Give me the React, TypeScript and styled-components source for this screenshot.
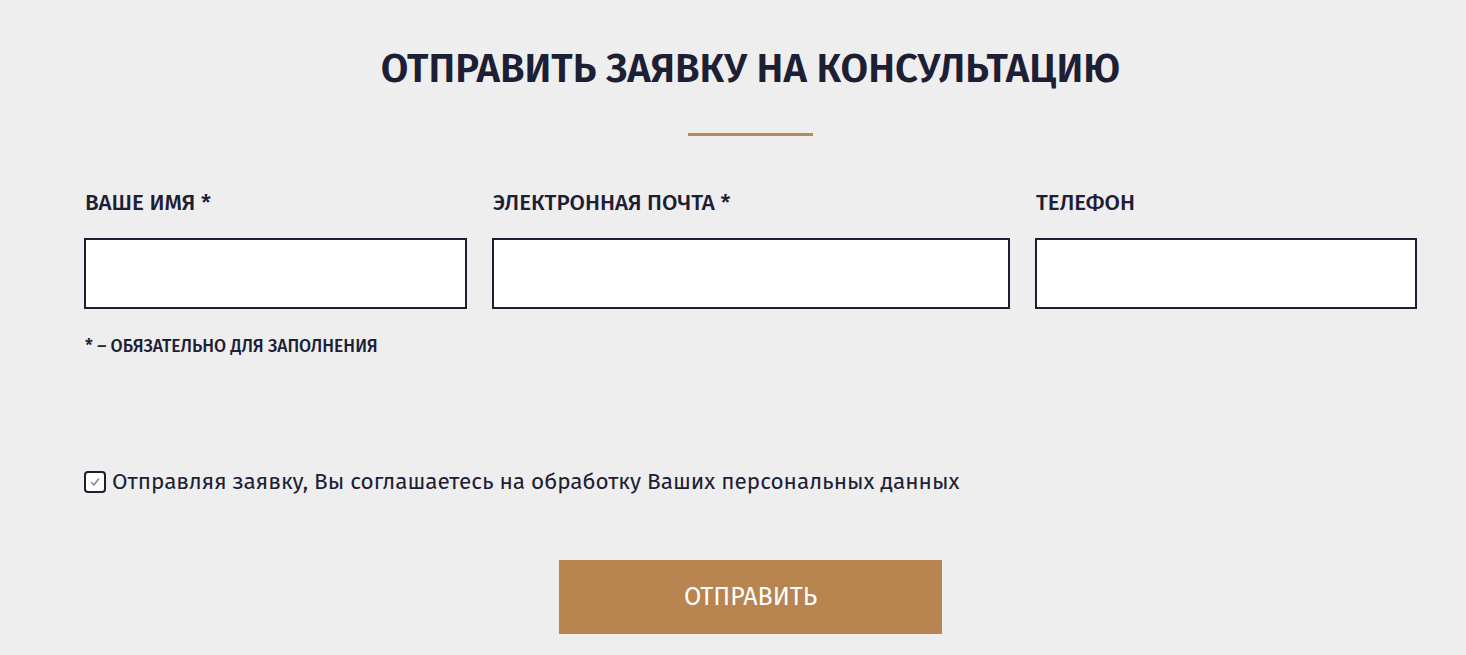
import React, { useState } from "react";
import styled, { createGlobalStyle } from "styled-components";

const GlobalStyle = createGlobalStyle`
  html, body {
    margin: 0;
    padding: 0;
    background: #eeeeee;
  }
  body {
    font-family: "Fira Sans", "Roboto Condensed", "Open Sans", sans-serif;
    color: #1d2034;
  }
  * { box-sizing: border-box; }
`;

const Section = styled.section`
  width: 1333px;
  margin-left: 84px;
  padding-top: 45px;
  display: flex;
  flex-direction: column;
`;

const Title = styled.h2`
  margin: 0;
  font-size: 40px;
  line-height: 48px;
  font-weight: 600;
  text-align: center;
  text-transform: uppercase;
  color: #1d2034;
`;

const Divider = styled.div`
  align-self: center;
  width: 125px;
  height: 3px;
  margin-top: 40px;
  background: #b98a5c;
`;

const Fields = styled.div`
  margin-top: 54px;
  display: grid;
  grid-template-columns: 383px 518px 382px;
  column-gap: 25px;
`;

const Field = styled.label`
  display: flex;
  flex-direction: column;
  gap: 22px;
`;

const Label = styled.span`
  font-size: 22.3px;
  line-height: 26px;
  font-weight: 500;
  text-transform: uppercase;
  padding-left: 1px;
`;

const Input = styled.input`
  height: 71px;
  width: 100%;
  border: 2px solid #1d2034;
  background: #ffffff;
  padding: 0 16px;
  font: inherit;
  font-size: 20px;
  outline: none;
`;

const Note = styled.p`
  margin: 27px 0 0;
  padding-left: 1px;
  font-size: 17.5px;
  line-height: 22px;
  font-weight: 500;
  text-transform: uppercase;
`;

const Agree = styled.label`
  margin-top: 110px;
  display: flex;
  align-items: center;
  gap: 6px;
  font-size: 22.5px;
  line-height: 28px;
  font-weight: 400;
  cursor: pointer;
`;

const Box = styled.span<{ $checked: boolean }>`
  width: 22px;
  height: 22px;
  flex: none;
  border: 2px solid #1d2034;
  border-radius: 4px;
  background: #ffffff;
  display: flex;
  align-items: center;
  justify-content: center;
  svg { opacity: ${(p) => (p.$checked ? 1 : 0)}; }
`;

const HiddenCheck = styled.input`
  position: absolute;
  opacity: 0;
  pointer-events: none;
`;

const Submit = styled.button`
  align-self: center;
  margin-top: 64px;
  width: 383px;
  height: 74px;
  border: none;
  background: #b8844f;
  color: #ffffff;
  font-family: inherit;
  font-size: 25px;
  font-weight: 400;
  text-transform: uppercase;
  cursor: pointer;
`;

export default function App() {
  const [checked, setChecked] = useState(true);
  return (
    <>
      <GlobalStyle />
      <Section>
        <Title>Отправить заявку на консультацию</Title>
        <Divider />
        <Fields>
          <Field>
            <Label>Ваше имя *</Label>
            <Input type="text" />
          </Field>
          <Field>
            <Label>Электронная почта *</Label>
            <Input type="email" />
          </Field>
          <Field>
            <Label>Телефон</Label>
            <Input type="tel" />
          </Field>
        </Fields>
        <Note>* – обязательно для заполнения</Note>
        <Agree>
          <HiddenCheck
            type="checkbox"
            checked={checked}
            onChange={(e) => setChecked(e.target.checked)}
          />
          <Box $checked={checked}>
            <svg width="12" height="12" viewBox="0 0 12 12" fill="none">
              <path d="M2.5 6.5 L5 9 L9.5 3" stroke="#7a7f8c" strokeWidth="1.4" strokeLinecap="round" strokeLinejoin="round" />
            </svg>
          </Box>
          Отправляя заявку, Вы соглашаетесь на обработку Ваших персональных данных
        </Agree>
        <Submit type="submit">Отправить</Submit>
      </Section>
    </>
  );
}
